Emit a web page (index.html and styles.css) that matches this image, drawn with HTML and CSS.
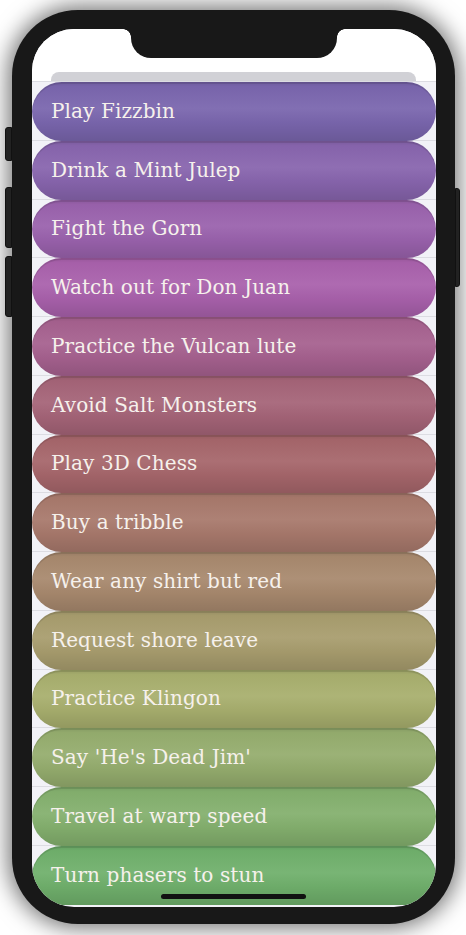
FILE: index.html
```html
<!DOCTYPE html>
<html>
<head>
<meta charset="utf-8">
<link rel="stylesheet" href="styles.css">
</head>
<body>
<div class="device">
  <div class="btn btn-mute"></div>
  <div class="btn btn-vol-up"></div>
  <div class="btn btn-vol-down"></div>
  <div class="btn btn-power"></div>
  <div class="screen">
    <div class="notch"></div>
    <div class="top-area"><div class="sheet-bar"></div></div>
    <ul class="list">
      <li class="row"><div class="pill c1">Play Fizzbin</div></li>
      <li class="row"><div class="pill c2">Drink a Mint Julep</div></li>
      <li class="row"><div class="pill c3">Fight the Gorn</div></li>
      <li class="row"><div class="pill c4">Watch out for Don Juan</div></li>
      <li class="row"><div class="pill c5">Practice the Vulcan lute</div></li>
      <li class="row"><div class="pill c6">Avoid Salt Monsters</div></li>
      <li class="row"><div class="pill c7">Play 3D Chess</div></li>
      <li class="row"><div class="pill c8">Buy a tribble</div></li>
      <li class="row"><div class="pill c9">Wear any shirt but red</div></li>
      <li class="row"><div class="pill c10">Request shore leave</div></li>
      <li class="row"><div class="pill c11">Practice Klingon</div></li>
      <li class="row"><div class="pill c12">Say 'He's Dead Jim'</div></li>
      <li class="row"><div class="pill c13">Travel at warp speed</div></li>
      <li class="row"><div class="pill c14">Turn phasers to stun</div></li>
    </ul>
    <div class="home-indicator"></div>
  </div>
</div>
</body>
</html>
```
FILE: styles.css
```css
html, body {
  margin: 0;
  padding: 0;
  background: #ffffff;
}
body {
  width: 466px;
  height: 935px;
  overflow: hidden;
  padding-top: 10px;
  padding-left: 12px;
  box-sizing: border-box;
}
.device {
  position: relative;
  width: 443px;
  height: 914px;
  background: #181818;
  border-radius: 66px;
  box-shadow: 0 0 22px 4px rgba(0,0,0,0.55);
  padding: 19px 19px 17px 20px;
  box-sizing: border-box;
}
.btn {
  position: absolute;
  background: #222;
  border: 1px solid #111;
  box-sizing: border-box;
}
.btn-mute { left: -7px; top: 117px; width: 7px; height: 34px; border-radius: 3px 0 0 3px; }
.btn-vol-up { left: -7px; top: 177px; width: 7px; height: 61px; border-radius: 3px 0 0 3px; }
.btn-vol-down { left: -7px; top: 246px; width: 7px; height: 61px; border-radius: 3px 0 0 3px; }
.btn-power { right: -5px; top: 178px; width: 5px; height: 99px; border-radius: 0 3px 3px 0; }
.screen {
  position: relative;
  width: 404px;
  height: 878px;
  background: #f2f2f7;
  border-radius: 42px;
  overflow: hidden;
  display: flex;
  flex-direction: column;
}
.notch {
  position: absolute;
  left: 99px;
  top: 0;
  width: 206px;
  height: 29px;
  background: #181818;
  border-radius: 0 0 20px 20px;
}
.notch::before, .notch::after {
  content: "";
  position: absolute;
  top: 0;
  width: 8px;
  height: 8px;
  background: radial-gradient(circle at 0 100%, transparent 7.5px, #181818 8px);
}
.notch::before { left: -8px; }
.notch::after { right: -8px; transform: scaleX(-1); }
.top-area {
  height: 53px;
  background: #ffffff;
  padding: 43px 20px 0 19px;
  box-sizing: border-box;
  flex: none;
}
.sheet-bar {
  height: 10px;
  background: #d1d1d6;
  border-radius: 8px 8px 0 0;
}
.list {
  list-style: none;
  margin: 0;
  padding: 0;
  border-top: 1px solid #dcdce2;
  margin-top: -1px;
}
.row {
  height: 58.75px;
  position: relative;
  box-sizing: border-box;
}
.row::after {
  content: "";
  position: absolute;
  left: 0; right: 0; bottom: 0;
  height: 1px;
  background: #dcdce2;
}
.pill {
  position: relative;
  z-index: 1;
  height: 100%;
  border-radius: 30px;
  display: flex;
  align-items: center;
  padding-left: 19px;
  padding-bottom: 1px;
  font-family: "DejaVu Serif", "Liberation Serif", serif;
  font-size: 20px;
  letter-spacing: 0.1px;
  color: #f6f1ec;
  box-sizing: border-box;
  background-image: linear-gradient(to bottom, rgba(0,0,0,0.10) 0, rgba(0,0,0,0.02) 8%, rgba(255,255,255,0.06) 45%, rgba(0,0,0,0.03) 70%, rgba(0,0,0,0.13) 100%);
  box-shadow: inset 0 2px 0 rgba(0,0,0,0.10);
}
.c1 { background-color: #7a66ae; }
.c2 { background-color: #8865ae; }
.c3 { background-color: #9a62ad; }
.c4 { background-color: #a961ac; }
.c5 { background-color: #a6618f; }
.c6 { background-color: #a56478; }
.c7 { background-color: #a6666b; }
.c8 { background-color: #a8796c; }
.c9 { background-color: #a8896e; }
.c10 { background-color: #a89d6e; }
.c11 { background-color: #a8af6e; }
.c12 { background-color: #95ad6e; }
.c13 { background-color: #84b06e; }
.c14 { background-color: #70b06c; }
.home-indicator {
  position: absolute;
  left: 129px;
  bottom: 8px;
  width: 145px;
  height: 5px;
  background: #111;
  border-radius: 3px;
  z-index: 2;
}
```
